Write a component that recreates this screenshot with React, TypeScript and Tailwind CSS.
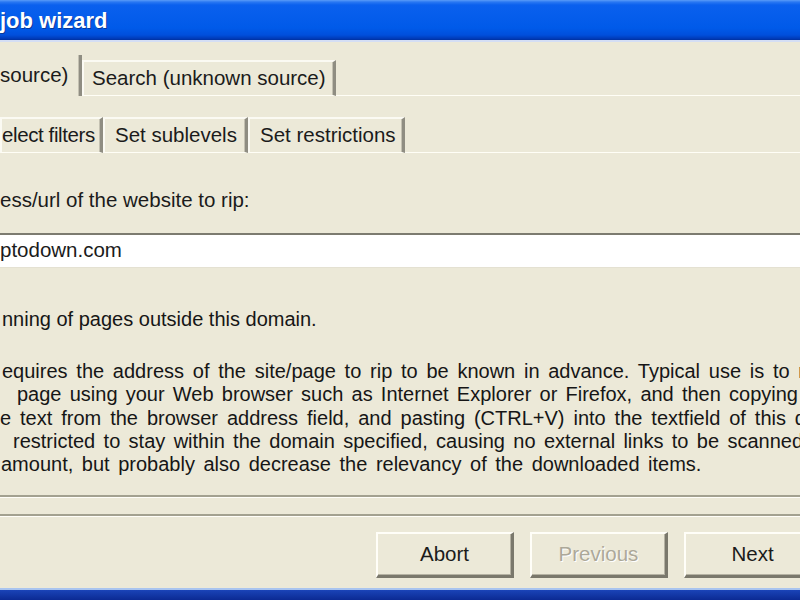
import React from "react";

const ui = "font-['Liberation_Sans',Arial,sans-serif]";

const Tab = (props: { label: string; className?: string }) => {
    const { label, className } = props;
    return (
        <div className={`h-[36px] flex items-center border-t-2 border-l-2 border-r-[3px] border-b border-t-[#fbfaf3] border-l-[#fbfaf3] border-r-[#8f8d82] border-b-[#fffef6] shadow-[inset_-1px_0_0_#c4c1b2] ${className ?? ""}`}>
            <span className="whitespace-nowrap">{label}</span>
        </div>
    );
};

const Button = (props: { label: string; disabled?: boolean }) => {
    const { label, disabled } = props;
    return (
        <button
            type="button"
            className={`w-[138px] h-[46px] shrink-0 bg-[#ece9d8] border-t-2 border-l-2 border-b-[3px] border-r-[3px] border-t-[#fffef8] border-l-[#fffef8] border-b-[#7a786c] border-r-[#7a786c] shadow-[inset_-1px_-1px_0_#b5b2a3] text-[20.5px] ${disabled ? "text-[#aca899] [text-shadow:1px_1px_0_#ffffff]" : "text-[#1b1b1b]"}`}
        >
            {label}
        </button>
    );
};

const lines = [
    { text: "equires the address of the site/page to rip to be known in advance. Typical use is to r", pl: "pl-[2px]", w: "w-[805px]" },
    { text: "page using your Web browser such as Internet Explorer or Firefox, and then copying", pl: "pl-[17px]", w: "w-[798px]" },
    { text: "e text from the browser address field, and pasting (CTRL+V) into the textfield of this d", pl: "pl-0", w: "w-[806px]" },
    { text: "restricted to stay within the domain specified, causing no external links to be scanned", pl: "pl-[13px]", w: "w-[803px]" },
];

export default function App() {
    return (
        <div className={`w-[800px] h-[600px] overflow-hidden bg-[#ece9d8] flex flex-col text-[#1b1b1b] ${ui}`}>
            {/* title bar */}
            <div className="h-[40px] shrink-0 flex items-center bg-[linear-gradient(to_bottom,#5a9cf8_0px,#2a78f2_2px,#0a60ee_5px,#005ae9_28px,#004fdc_35px,#0038b4_39px,#00309c_40px)]">
                <span className="text-white font-bold text-[22px] leading-none pt-[2px] [text-shadow:1px_1px_0_#0a3a9c]">job wizard</span>
            </div>
            <div className="h-[2px] shrink-0 bg-[#d4def4]" />

            {/* tab row 1 */}
            <div className="mt-[13px] h-[41px] shrink-0 flex items-end text-[20.5px]">
                <div className="h-full w-[82px] flex items-center pb-[1px] border-r-[3px] border-r-[#8f8d82] shadow-[inset_-1px_0_0_#c4c1b2]">
                    <span className="whitespace-nowrap">source)</span>
                </div>
                <Tab label="Search (unknown source)" className="w-[254px] pl-[8px]" />
                <div className="flex-1 h-px bg-[#fffef6]" />
            </div>

            {/* tab row 2 */}
            <div className="mt-[22px] h-[35px] shrink-0 flex items-end text-[20.5px]">
                <Tab label="elect filters" className="w-[103px] h-[35px] border-l-0 pl-0 tracking-[-0.4px]" />
                <Tab label="Set sublevels" className="w-[145px] h-[35px] pl-[10px]" />
                <Tab label="Set restrictions" className="w-[157px] h-[35px] pl-[10px]" />
                <div className="flex-1 h-px bg-[#fffef6]" />
            </div>

            {/* address field */}
            <div className="mt-[35px] h-[24px] leading-[24px] text-[20.5px] whitespace-nowrap">ess/url of the website to rip:</div>
            <div className="mt-[21px] h-[35px] shrink-0 bg-white border-t-2 border-t-[#7c7b70] border-b border-b-[#e4e1d2] flex items-center text-[20.5px]">
                <span className="pb-[1px]">ptodown.com</span>
            </div>

            {/* description */}
            <div className="mt-[39px] h-[24px] leading-[24px] text-[20px] whitespace-nowrap text-[#161616] pl-[2px]">nning of pages outside this domain.</div>
            <div className="mt-[29px] text-[20px] leading-[23.25px] text-[#161616]">
                {lines.map((line) => (
                    <div key={line.text} className={`${line.pl} ${line.w} shrink-0 text-justify [text-align-last:justify] whitespace-normal`}>
                        {line.text}
                    </div>
                ))}
                <div className="pl-px whitespace-nowrap [word-spacing:3px]">amount, but probably also decrease the relevancy of the downloaded items.</div>
            </div>

            {/* separators */}
            <div className="mt-[19px] h-[2px] shrink-0 bg-[#a3a190]" />
            <div className="h-px shrink-0 bg-[#fffef8]" />
            <div className="mt-[16px] h-[2px] shrink-0 bg-[#a3a190]" />
            <div className="h-px shrink-0 bg-[#fffef8]" />

            {/* buttons */}
            <div className="mt-[15px] w-[822px] flex justify-end gap-[16px]">
                <Button label="Abort" />
                <Button label="Previous" disabled />
                <Button label="Next" />
            </div>

            {/* window frame bottom */}
            <div className="mt-auto h-[2px] shrink-0 bg-[#a9c4ef]" />
            <div className="h-[10px] shrink-0 bg-[linear-gradient(to_bottom,#1a44b8,#0b2a93)]" />
        </div>
    );
}
